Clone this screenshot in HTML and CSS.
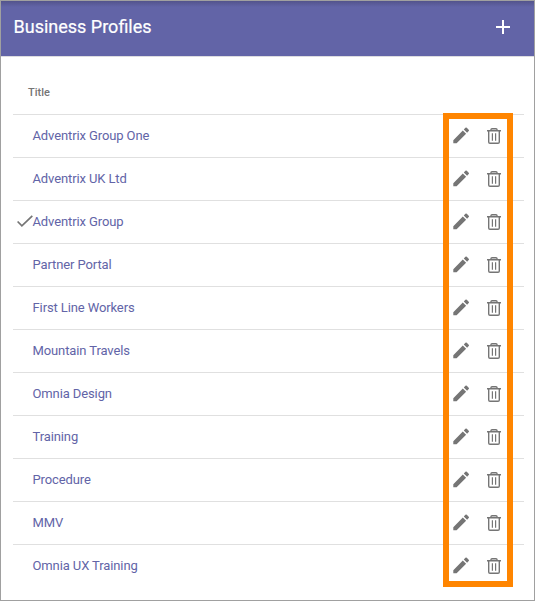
FILE: index.html
```html
<!DOCTYPE html>
<html lang="en">
<head>
<meta charset="utf-8">
<title>Business Profiles</title>
<link rel="stylesheet" href="styles.css">
</head>
<body>
<svg class="defs" aria-hidden="true">
  <symbol id="pencil" viewBox="0 0 17 17"><path d="M.3 13.2v3h3.3L13.1 6.7 9.8 3.4zM10.8 2.4l1.6-1.6q.7-.7 1.4 0l1.9 1.9q.7.7 0 1.4l-1.6 1.6z"/></symbol>
  <symbol id="trash" viewBox="0 0 14 16"><path d="M0 2.7h14M4 2.7V1.6Q4 .7 5 .7h4q1 0 1 .9v1.1M1.7 3v11q0 1.3 1.3 1.3h8q1.3 0 1.3-1.3V3" fill="none" stroke="currentColor" stroke-width="1.4"/><path d="M5.4 5.2v7.6M8.6 5.2v7.6" fill="none" stroke="currentColor" stroke-width="1.2"/></symbol>
</svg>
<div class="panel">
  <header class="header">
    <h1 class="heading">Business Profiles</h1>
    <svg class="add" viewBox="0 0 14 14"><path d="M7 0v14M0 7h14"/></svg>
  </header>
  <main class="content">
    <div class="column-title">Title</div>
    <ul class="list" id="list"></ul>
    <div class="highlight"></div>
  </main>
</div>
<script src="app.js"></script>
</body>
</html>
```
FILE: styles.css
```css
* { box-sizing: border-box; }
body { margin: 0; font-family: Roboto, "Liberation Sans", sans-serif; background: #fff; }
.defs { display: none; }
.panel { height: 601px; border: 1px solid #a0a0a0; }
.header {
  display: flex; align-items: center; justify-content: space-between;
  height: 56px; padding: 0 24px 3px 12.5px;
  background: linear-gradient(#53538c, #6264a7 6px);
  border-bottom: 1px solid #dcdce0; color: #fff;
}
.heading { margin: 0; font-size: 18px; font-weight: 400; line-height: 24px; -webkit-text-stroke: 0.2px #fff; }
.add { width: 14px; height: 14px; fill: none; stroke: #fff; stroke-width: 2; }
.content { position: relative; padding: 0 10px 0 12px; }
.column-title { height: 57px; padding: 28px 0 0 15px; font-size: 11px; line-height: 15px; font-weight: 500; color: #757575; }
.list { margin: 0; padding: 0; list-style: none; }
.row { display: flex; align-items: center; height: 43px; border-top: 1px solid #e0e0e0; padding: 0 23px 0 4px; }
.mark { width: 16px; height: 12px; margin-bottom: 2px; flex: none; fill: none; stroke: #757575; stroke-width: 1.7; }
.name { flex: 1; margin-left: -0.5px; font-size: 13px; line-height: 18px; letter-spacing: -0.11px; color: #6264a7; }
.pencil { width: 17px; height: 17px; margin: 0 17px 1px 0; fill: #757575; }
.trash { width: 14px; height: 16px; color: #757575; }
.highlight { position: absolute; left: 442px; top: 56px; width: 70px; height: 474px; border: 6px solid #ff8500; }
```
FILE: app.js
```javascript
const names = ["Adventrix Group One", "Adventrix UK Ltd", "Adventrix Group", "Partner Portal", "First Line Workers", "Mountain Travels", "Omnia Design", "Training", "Procedure", "MMV", "Omnia UX Training"];
const selected = "Adventrix Group";
document.getElementById("list").innerHTML = names.map(name => `
  <li class="row">
    <svg class="mark" viewBox="0 0 16 12">${name === selected ? '<path d="M.6 6.5l4.3 4.3L15.3.8"/>' : ""}</svg>
    <span class="name">${name}</span>
    <svg class="pencil"><use href="#pencil"/></svg>
    <svg class="trash"><use href="#trash"/></svg>
  </li>`).join("");
```
